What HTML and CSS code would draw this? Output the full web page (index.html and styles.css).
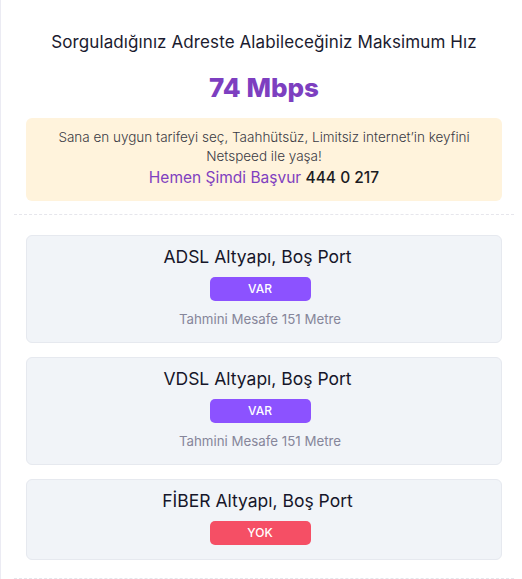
FILE: index.html
```html
<!DOCTYPE html>
<html lang="tr">
<head>
<meta charset="utf-8">
<link rel="stylesheet" href="styles.css">
</head>
<body>
<div class="page">
  <div class="wrap">
    <section class="result">
      <h1 class="heading">Sorguladığınız Adreste Alabileceğiniz Maksimum Hız</h1>
      <div class="speed">74 Mbps</div>
      <div class="notice">
        <p class="notice-text">Sana en uygun tarifeyi seç, Taahhütsüz, Limitsiz internet’in keyfini<br>Netspeed ile yaşa!</p>
        <p class="notice-cta"><span class="cta-link">Hemen Şimdi Başvur</span> <span class="cta-phone">444 0 217</span></p>
      </div>
    </section>
    <section class="ports">
      <div class="card">
        <div class="card-title">ADSL Altyapı, Boş Port</div>
        <div class="badge badge-yes">VAR</div>
        <div class="distance">Tahmini Mesafe 151 Metre</div>
      </div>
      <div class="card">
        <div class="card-title">VDSL Altyapı, Boş Port</div>
        <div class="badge badge-yes">VAR</div>
        <div class="distance">Tahmini Mesafe 151 Metre</div>
      </div>
      <div class="card card-short">
        <div class="card-title">FİBER Altyapı, Boş Port</div>
        <div class="badge badge-no">YOK</div>
      </div>
    </section>
  </div>
</div>
</body>
</html>
```

FILE: styles.css
```css
* { box-sizing: border-box; }
html, body { margin: 0; padding: 0; background: #ffffff; }
body {
  font-family: "Inter", "Noto Sans", sans-serif;
  color: #1b1b2f;
}
.page {
  border-left: 1px solid #ebebf3;
  min-height: 579px;
}
.wrap {
  margin: 0 8px 0 13px;
}
.result {
  padding: 30px 12px 13px;
  border-bottom: 1px dashed #e6e6ec;
  text-align: center;
}
.heading {
  margin: 0;
  font-size: 17px;
  letter-spacing: 0.1px;
  line-height: 24px;
  font-weight: 400;
  color: #1b1b2f;
}
.speed {
  margin-top: 17px;
  font-size: 26px;
  line-height: 34px;
  font-weight: 800;
  color: #7d3fc0;
}
.notice {
  margin-top: 13px;
  background: #fff3dc;
  border-radius: 6px;
  padding: 10px 12px 11px;
}
.notice-text {
  margin: 0;
  font-size: 13.5px;
  line-height: 19px;
  font-weight: 300;
  color: #3a3a44;
}
.notice-cta {
  margin: 0;
  font-size: 15.5px;
  line-height: 24px;
}
.cta-link { color: #8040c0; font-weight: 400; }
.cta-phone { color: #1b1b22; font-weight: 500; }
.ports {
  padding: 20px 12px 18px;
  border-bottom: 1px dashed #e6e6ec;
  display: flex;
  flex-direction: column;
  gap: 14px;
}
.card {
  background: #f1f4f8;
  border: 1px solid #e6e9ef;
  border-radius: 6px;
  padding: 8px 20px 14px 12px;
  display: flex;
  flex-direction: column;
  align-items: center;
}
.card-title {
  font-size: 17.5px;
  line-height: 26px;
  font-weight: 400;
  color: #16162a;
  padding-right: 5px;
}
.badge {
  margin-top: 7px;
  width: 101px;
  height: 24px;
  border-radius: 5px;
  color: #ffffff;
  font-size: 12px;
  font-weight: 500;
  line-height: 24px;
  text-align: center;
}
.badge-yes { background: #8c52ff; }
.badge-no { background: #f54f65; }
.distance {
  margin-top: 9px;
  font-size: 13.3px;
  line-height: 18px;
  color: #86869a;
}
```
